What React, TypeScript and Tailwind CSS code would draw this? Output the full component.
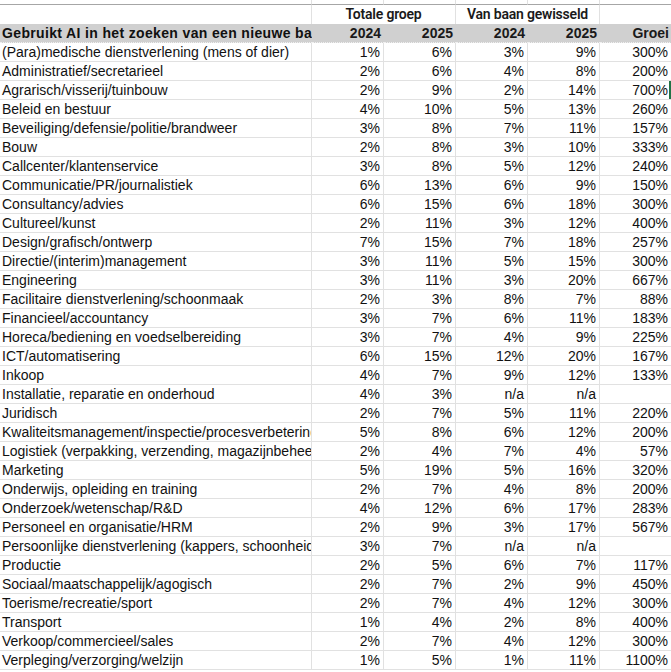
import React from "react";

type Row = [string, string, string, string, string, string];

const rows: Row[] = [
  ["(Para)medische dienstverlening (mens of dier)", "1%", "6%", "3%", "9%", "300%"],
  ["Administratief/secretarieel", "2%", "6%", "4%", "8%", "200%"],
  ["Agrarisch/visserij/tuinbouw", "2%", "9%", "2%", "14%", "700%"],
  ["Beleid en bestuur", "4%", "10%", "5%", "13%", "260%"],
  ["Beveiliging/defensie/politie/brandweer", "3%", "8%", "7%", "11%", "157%"],
  ["Bouw", "2%", "8%", "3%", "10%", "333%"],
  ["Callcenter/klantenservice", "3%", "8%", "5%", "12%", "240%"],
  ["Communicatie/PR/journalistiek", "6%", "13%", "6%", "9%", "150%"],
  ["Consultancy/advies", "6%", "15%", "6%", "18%", "300%"],
  ["Cultureel/kunst", "2%", "11%", "3%", "12%", "400%"],
  ["Design/grafisch/ontwerp", "7%", "15%", "7%", "18%", "257%"],
  ["Directie/(interim)management", "3%", "11%", "5%", "15%", "300%"],
  ["Engineering", "3%", "11%", "3%", "20%", "667%"],
  ["Facilitaire dienstverlening/schoonmaak", "2%", "3%", "8%", "7%", "88%"],
  ["Financieel/accountancy", "3%", "7%", "6%", "11%", "183%"],
  ["Horeca/bediening en voedselbereiding", "3%", "7%", "4%", "9%", "225%"],
  ["ICT/automatisering", "6%", "15%", "12%", "20%", "167%"],
  ["Inkoop", "4%", "7%", "9%", "12%", "133%"],
  ["Installatie, reparatie en onderhoud", "4%", "3%", "n/a", "n/a", ""],
  ["Juridisch", "2%", "7%", "5%", "11%", "220%"],
  ["Kwaliteitsmanagement/inspectie/procesverbetering", "5%", "8%", "6%", "12%", "200%"],
  ["Logistiek (verpakking, verzending, magazijnbeheer)", "2%", "4%", "7%", "4%", "57%"],
  ["Marketing", "5%", "19%", "5%", "16%", "320%"],
  ["Onderwijs, opleiding en training", "2%", "7%", "4%", "8%", "200%"],
  ["Onderzoek/wetenschap/R&D", "4%", "12%", "6%", "17%", "283%"],
  ["Personeel en organisatie/HRM", "2%", "9%", "3%", "17%", "567%"],
  ["Persoonlijke dienstverlening (kappers, schoonheidsspecialisten)", "3%", "7%", "n/a", "n/a", ""],
  ["Productie", "2%", "5%", "6%", "7%", "117%"],
  ["Sociaal/maatschappelijk/agogisch", "2%", "7%", "2%", "9%", "450%"],
  ["Toerisme/recreatie/sport", "2%", "7%", "4%", "12%", "300%"],
  ["Transport", "1%", "4%", "2%", "8%", "400%"],
  ["Verkoop/commercieel/sales", "2%", "7%", "4%", "12%", "300%"],
  ["Verpleging/verzorging/welzijn", "1%", "5%", "1%", "11%", "1100%"],
];

const cell =
  "h-[19px] border-b border-r border-[#e1e1e1] leading-[18px] whitespace-nowrap overflow-hidden";

export default function App() {
  return (
    <div
      className="w-[671px] h-[672px] overflow-hidden bg-white text-[14px] text-[#111]"
      style={{ fontFamily: '"Liberation Sans", Arial, sans-serif' }}
    >
      <div className="grid grid-cols-[312px_72px_72px_72px_72px_72px] w-[672px]">
        {/* top strip */}
        <div className="h-[5px] border-b border-b-[#a6a6a6] border-r border-r-[#e1e1e1]" />
        <div className="h-[5px] border-b border-b-[#a6a6a6] border-r border-r-[#e1e1e1]" />
        <div className="h-[5px] border-b border-b-[#a6a6a6] border-r border-r-[#e1e1e1]" />
        <div className="h-[5px] border-b border-b-[#a6a6a6] border-r border-r-[#e1e1e1]" />
        <div className="h-[5px] border-b border-b-[#a6a6a6] border-r border-r-[#e1e1e1]" />
        <div className="h-[5px] border-b border-b-[#a6a6a6] border-r border-r-[#e1e1e1]" />

        {/* group header row */}
        <div className="h-[19px] border-r border-[#e1e1e1]" />
        <div
          className="col-span-2 h-[19px] border-r border-[#e1e1e1] text-center leading-[18px] font-semibold text-[#1a1a1a] tracking-[-0.2px]"
          style={{ fontFamily: 'Roboto, "Liberation Sans", sans-serif' }}
        >
          Totale groep
        </div>
        <div
          className="col-span-2 h-[19px] border-r border-[#e1e1e1] text-center leading-[18px] font-semibold text-[#1a1a1a] tracking-[-0.2px]"
          style={{ fontFamily: 'Roboto, "Liberation Sans", sans-serif' }}
        >
          Van baan gewisseld
        </div>
        <div className="h-[19px] border-r border-[#e1e1e1]" />

        {/* column header row */}
        <div className="h-[19px] bg-[#d0d0d0] border-b border-dotted border-b-[#f0f0f0] font-bold leading-[18px] pl-[2px] tracking-[0.35px] whitespace-nowrap overflow-hidden">
          Gebruikt AI in het zoeken van een nieuwe baan
        </div>
        {["2024", "2025", "2024", "2025", "Groei"].map((h, i) => (
          <div
            key={i}
            className="h-[19px] bg-[#d0d0d0] border-b border-dotted border-b-[#f0f0f0] font-bold leading-[18px] text-right pr-[3px] text-[#1a1a1a]"
          >
            {h}
          </div>
        ))}

        {/* data rows */}
        {rows.map((r, ri) => (
          <React.Fragment key={ri}>
            <div className={`${cell} pl-[2px]`}>{r[0]}</div>
            {r.slice(1).map((v, ci) => (
              <div
                key={ci}
                className={`${cell} text-right pr-[3px] ${
                  ri === 2 && ci === 4 ? "shadow-[inset_-2px_0_0_#217346]" : ""
                }`}
              >
                {v}
              </div>
            ))}
          </React.Fragment>
        ))}
      </div>
    </div>
  );
}
